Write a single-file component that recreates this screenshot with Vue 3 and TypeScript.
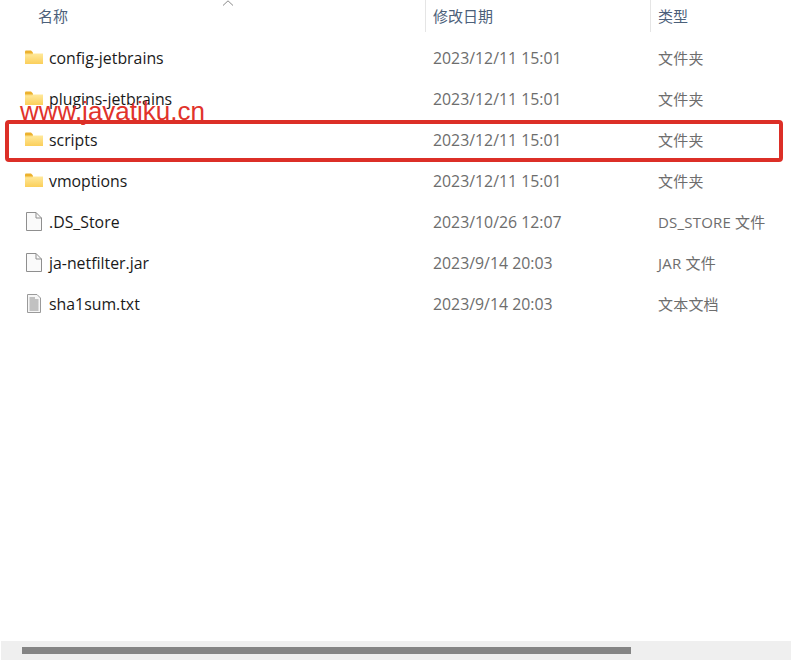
<script setup lang="ts">
interface Row {
  name: string
  date: string
  type: string
  icon: 'folder' | 'file' | 'text'
}

const rows: Row[] = [
  { name: 'config-jetbrains', date: '2023/12/11 15:01', type: '文件夹', icon: 'folder' },
  { name: 'plugins-jetbrains', date: '2023/12/11 15:01', type: '文件夹', icon: 'folder' },
  { name: 'scripts', date: '2023/12/11 15:01', type: '文件夹', icon: 'folder' },
  { name: 'vmoptions', date: '2023/12/11 15:01', type: '文件夹', icon: 'folder' },
  { name: '.DS_Store', date: '2023/10/26 12:07', type: 'DS_STORE 文件', icon: 'file' },
  { name: 'ja-netfilter.jar', date: '2023/9/14 20:03', type: 'JAR 文件', icon: 'file' },
  { name: 'sha1sum.txt', date: '2023/9/14 20:03', type: '文本文档', icon: 'text' },
]
</script>

<template>
  <div class="explorer">
    <div class="header">
      <div class="head-name">名称</div>
      <svg class="sort" width="12" height="6" viewBox="0 0 12 6">
        <path d="M1 5.5 L6 0.8 L11 5.5" fill="none" stroke="#8a8a8a" stroke-width="1" />
      </svg>
      <div class="head-date">修改日期</div>
      <div class="head-type">类型</div>
    </div>

    <div class="list">
      <div v-for="row in rows" :key="row.name" class="row">
        <div class="cell-name">
          <svg v-if="row.icon === 'folder'" class="icon" width="20" height="20" viewBox="0 0 20 20">
            <defs>
              <linearGradient id="folderFill" x1="0" y1="0" x2="0" y2="1">
                <stop offset="0" stop-color="#ffe99c" />
                <stop offset="1" stop-color="#fbcf5a" />
              </linearGradient>
            </defs>
            <path d="M1 3.5 Q1 2.5 2 2.5 H7 L9 4.5 V7 H1 Z" fill="#ecb12e" />
            <path d="M1 5.5 H19 V16 H1 Z" fill="url(#folderFill)" />
            <path d="M1 5.5 H8.5 V6.2 H1 Z" fill="#f3c24a" />
          </svg>
          <svg v-else-if="row.icon === 'file'" class="icon" width="20" height="20" viewBox="0 0 20 20">
            <path d="M2.5 0.5 H12 L17.5 6 V18.5 H2.5 Z" fill="#fafafa" stroke="#8f8f8f" stroke-width="1" />
            <path d="M12 0.5 V6 H17.5" fill="none" stroke="#8f8f8f" stroke-width="1" />
          </svg>
          <svg v-else class="icon" width="20" height="20" viewBox="0 0 20 20">
            <path d="M3.5 0.5 H13 L16.5 4 V18.5 H3.5 Z" fill="#f6f6f6" stroke="#9a9a9a" stroke-width="1" />
            <path d="M5.5 4 H11 M5.5 6 H14.5 M5.5 8 H14.5 M5.5 10 H14.5 M5.5 12 H14.5 M5.5 14 H14.5 M5.5 16 H14.5" stroke="#8c8c8c" stroke-width="1" />
          </svg>
          <span class="name">{{ row.name }}</span>
        </div>
        <div class="cell-date">{{ row.date }}</div>
        <div class="cell-type">{{ row.type }}</div>
      </div>
    </div>

    <div class="watermark">www.javatiku.cn</div>
    <div class="highlight"></div>

    <div class="scroll-track">
      <div class="scroll-thumb"></div>
    </div>
  </div>
</template>

<style>
html,
body {
  margin: 0;
  background: #ffffff;
}
</style>

<style scoped>
.explorer {
  position: relative;
  width: 791px;
  height: 660px;
  overflow: hidden;
  display: flex;
  flex-direction: column;
  background: #ffffff;
  font-family: "Open Sans", "Noto Sans CJK SC", sans-serif;
  font-size: 15.85px;
}

.header {
  position: relative;
  flex: none;
  height: 32px;
  display: grid;
  grid-template-columns: 425px 225px 1fr;
  align-items: center;
  color: #4c607a;
  font-size: 15px;
  font-family: "Noto Sans CJK SC", sans-serif;
}

.head-name {
  padding-left: 38px;
  padding-bottom: 2px;
}

.head-date,
.head-type {
  height: 32px;
  line-height: 31px;
  padding-left: 7px;
  border-left: 1px solid #e5e5e5;
  box-sizing: border-box;
}

.sort {
  position: absolute;
  left: 222px;
  top: 0;
}

.list {
  flex: 1;
  padding-top: 5px;
  display: flex;
  flex-direction: column;
}

.row {
  height: 41px;
  display: grid;
  grid-template-columns: 425px 225px 1fr;
  align-items: center;
  flex: none;
}

.cell-name {
  display: flex;
  align-items: center;
  padding-left: 24px;
  color: #1a1a1a;
}

.icon {
  flex: none;
  margin-right: 5px;
}

.name {
  white-space: nowrap;
}

.cell-date {
  padding-left: 8px;
  color: #6d6d6d;
}

.cell-type {
  padding-left: 8px;
  color: #6d6d6d;
  font-size: 15px;
  letter-spacing: 0.2px;
  white-space: nowrap;
}

.watermark {
  position: absolute;
  left: 20px;
  top: 96px;
  font-family: "Liberation Sans", sans-serif;
  font-size: 26px;
  line-height: 30px;
  color: #e1332b;
  white-space: nowrap;
}

.highlight {
  position: absolute;
  left: 5px;
  top: 120px;
  width: 778px;
  height: 42px;
  box-sizing: border-box;
  border: 4px solid #dc2f27;
  border-radius: 4px;
}

.scroll-track {
  flex: none;
  height: 19px;
  margin-left: 1px;
  background: #efefef;
  display: flex;
  align-items: center;
  padding-left: 21px;
}

.scroll-thumb {
  width: 609px;
  height: 7px;
  background: #858585;
}
</style>
